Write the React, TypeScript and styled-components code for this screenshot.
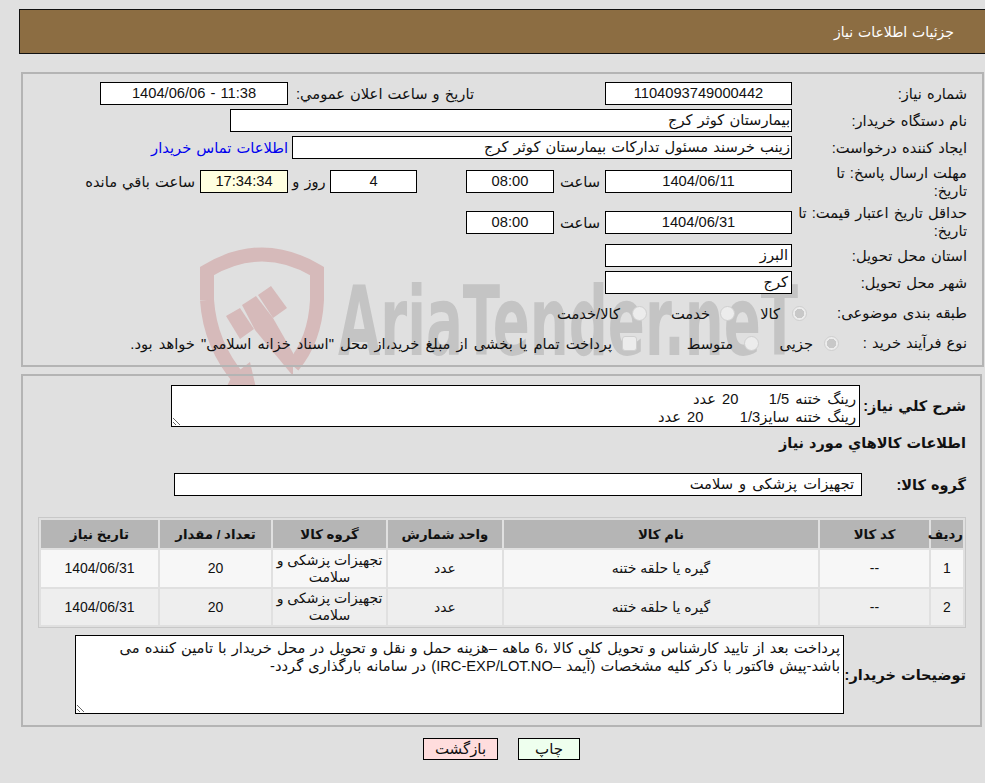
import React from "react";
import styled, { createGlobalStyle } from "styled-components";

const fontStack = `"Liberation Sans", "DejaVu Sans", sans-serif`;

const GlobalStyle = createGlobalStyle`
html, body {
  margin: 0;
  padding: 0;
  background: #e0e0e0;
}
body {
  font-family: ${fontStack};
  font-size: 14.7px;
  word-spacing: 1px;
  color: #111;
}
`;

const Page = styled.div`
  position: relative;
  width: 985px;
  height: 783px;
  overflow: hidden;
  direction: rtl;
  padding-top: 9px;
  box-sizing: border-box;
`;

const Watermark = styled.svg`
  position: absolute;
  left: 190px;
  top: 240px;
  width: 640px;
  height: 160px;
  z-index: 0;
`;

const Header = styled.div`
  position: relative;
  z-index: 1;
  box-sizing: border-box;
  height: 45px;
  margin-left: 19px;
  padding-right: 31px;
  display: flex;
  align-items: center;
  background: #8c6d42;
  border: 1px solid #111;
  border-right: none;
  color: #fff;
  font-size: 14px;
`;

const Panel = styled.div<{ $top: number; $right: number }>`
  position: relative;
  z-index: 1;
  box-sizing: border-box;
  margin-top: ${(p) => p.$top}px;
  margin-left: 21px;
  margin-right: ${(p) => p.$right}px;
  border: 2px solid #b4b4b4;
`;

const FormPanel = styled(Panel)`
  height: 295px;
  padding: 8px 15px 0 0;
  display: flex;
  flex-direction: column;
  gap: 4px;
`;

const DetailPanel = styled(Panel)`
  height: 353px;
  padding: 9px 14px 0 0;
`;

const Row = styled.div<{ $h?: number }>`
  display: flex;
  align-items: center;
  height: ${(p) => p.$h ?? 23}px;
`;

const Label = styled.div<{ $w?: number }>`
  box-sizing: border-box;
  width: ${(p) => p.$w ?? 175}px;
  flex: none;
  padding-left: 5px;
  line-height: 18px;
`;

const BoldLabel = styled.div<{ $w: number }>`
  width: ${(p) => p.$w}px;
  flex: none;
  font-size: 14.5px;
  font-weight: 700;
  white-space: nowrap;
`;

const Field = styled.div<{ $w: number; $center?: boolean; $pad?: number; $bg?: string; $ws?: number }>`
  box-sizing: border-box;
  width: ${(p) => p.$w}px;
  height: 23px;
  flex: none;
  padding: 0 ${(p) => p.$pad ?? 1}px;
  line-height: 21px;
  background: ${(p) => p.$bg ?? "#fff"};
  border: 1px solid #000;
  text-align: ${(p) => (p.$center ? "center" : "start")};
  word-spacing: ${(p) => p.$ws ?? 1}px;
  white-space: nowrap;
  overflow: hidden;
`;

const Text = styled.span<{ $before?: number; $w?: number; $center?: boolean }>`
  flex: none;
  margin-right: ${(p) => p.$before ?? 0}px;
  width: ${(p) => (p.$w ? `${p.$w}px` : "auto")};
  text-align: ${(p) => (p.$center ? "center" : "start")};
  white-space: nowrap;
`;

const PurchaseNote = styled(Text)`
  word-spacing: 2px;
`;

const ContactLink = styled.a`
  flex: none;
  margin-right: 4px;
  color: #0000ee;
  text-decoration: none;
  white-space: nowrap;
`;

const Radio = styled.input`
  appearance: none;
  flex: none;
  box-sizing: border-box;
  width: 15px;
  height: 15px;
  margin: 0;
  border-radius: 50%;
  border: 1px solid #cfcfcf;
  background: #ececec;
  &:checked {
    background: radial-gradient(circle, #c8c8c8 0 4.5px, #ececec 5px);
  }
`;

const CheckBox = styled.span`
  flex: none;
  box-sizing: border-box;
  width: 15px;
  height: 15px;
  border-radius: 3px;
  border: 1px solid #cfcfcf;
  background: #ececec;
`;

const NoteArea = styled.textarea<{ $w: number; $h: number; $pt: number; $ws: number }>`
  box-sizing: border-box;
  flex: none;
  width: ${(p) => p.$w}px;
  height: ${(p) => p.$h}px;
  margin: 0;
  padding: ${(p) => p.$pt}px 3px 0;
  border: 1px solid #000;
  border-radius: 0;
  outline: none;
  background: #fff;
  color: #111;
  font-family: ${fontStack};
  font-size: 14.7px;
  word-spacing: ${(p) => p.$ws}px;
  line-height: 18px;
  overflow: hidden;
  resize: both;
`;

const SectionTitle = styled.div`
  margin-top: 7px;
  height: 18px;
  line-height: 18px;
  font-size: 14.5px;
  font-weight: 700;
`;

const GroupRow = styled(Row)`
  margin-top: 21px;
`;

const ItemsTable = styled.table`
  box-sizing: border-box;
  width: 928px;
  margin-top: 21px;
  table-layout: fixed;
  border-collapse: separate;
  border-spacing: 2px;
  border: 1px solid #c8c8c8;
  font-size: 14px;
  word-spacing: 0;
  text-align: center;
`;

const HeadCell = styled.th`
  height: 28px;
  padding: 0;
  background: #b5b5b5;
  font-weight: 700;
  font-size: 13.3px;
`;

const Cell = styled.td<{ $even: boolean }>`
  height: ${(p) => (p.$even ? 36 : 37)}px;
  padding: 0 2px;
  line-height: 17px;
  background: ${(p) => (p.$even ? "#eeeeee" : "#f7f7f7")};
`;

const NotesRow = styled.div`
  display: flex;
  align-items: center;
  margin-top: 7px;
`;

const Actions = styled.div`
  position: relative;
  z-index: 1;
  display: flex;
  gap: 20px;
  margin-top: 11px;
  margin-right: 405px;
`;

const ActionButton = styled.button<{ $bg: string; $w: number }>`
  box-sizing: border-box;
  flex: none;
  width: ${(p) => p.$w}px;
  height: 22px;
  padding: 0;
  border: 1px solid #000;
  background: ${(p) => p.$bg};
  color: #111;
  font-family: ${fontStack};
  font-size: 15px;
  line-height: 20px;
`;

const columns: [string, number][] = [
  ["رديف", 32],
  ["کد کالا", 109],
  ["نام کالا", 314],
  ["واحد شمارش", 114],
  ["گروه کالا", 113],
  ["تعداد / مقدار", 111],
  ["تاریخ نیاز", 117],
];

const items = [
  ["1", "--", "گیره یا حلقه ختنه", "عدد", "تجهیزات پزشکی و سلامت", "20", "1404/06/31"],
  ["2", "--", "گیره یا حلقه ختنه", "عدد", "تجهیزات پزشکی و سلامت", "20", "1404/06/31"],
];

const summary = "رینگ ختنه 1/5     20 عدد\nرینگ ختنه سایز1/3      20 عدد";
const buyerNotes =
  "پرداخت بعد از تایید کارشناس و تحویل کلی کالا ،6 ماهه –هزینه حمل و نقل و تحویل در محل خریدار با تامین کننده می\nباشد-پیش فاکتور با ذکر کلیه مشخصات (آیمد –IRC-EXP/LOT.NO) در سامانه بارگذاری گردد-";

const App: React.FunctionComponent<{}> = () => {
  return (
    <Page>
      <GlobalStyle />
      <Watermark viewBox="0 0 640 160">
        <g fill="none" stroke="#d6baba" strokeWidth="14">
          <path d="M17 60 L17 31 Q72 -2 127 31 L127 60 Q125 100 103 126" />
          <path d="M17 60 Q20 105 50 140" />
        </g>
        <g fill="#d6baba">
          <path d="M36 76 L50 68 L64 89 L50 99 Z" />
          <path d="M52 65 L66 56 L83 78 L103 113 L103 136 L65 90 Z" />
          <path d="M68 55 L81 46 L97 68 L83 78 Z" />
          <path d="M60 122 L66 148 L36 148 L42 136 Z" />
        </g>
        <text
          x="148"
          y="115"
          fill="#c4c4c4"
          fontFamily="'DejaVu Sans', sans-serif"
          fontWeight="700"
          fontSize="96"
          direction="ltr"
          textLength="460"
          lengthAdjust="spacingAndGlyphs"
        >
          AriaTender.neT
        </text>
      </Watermark>

      <Header>جزئیات اطلاعات نیاز</Header>

      <FormPanel $top={18} $right={1}>
        <Row>
          <Label>شماره نیاز:</Label>
          <Field $w={187} $center>1104093749000442</Field>
          <Text $before={131} $w={186}>تاریخ و ساعت اعلان عمومي:</Text>
          <Field $w={188} $center>11:38 - 1404/06/06</Field>
        </Row>
        <Row>
          <Label>نام دستگاه خریدار:</Label>
          <Field $w={562}>بیمارستان کوثر کرج</Field>
        </Row>
        <Row>
          <Label>ایجاد کننده درخواست:</Label>
          <Field $w={500}>زینب خرسند مسئول تدارکات بیمارستان کوثر کرج</Field>
          <ContactLink href="#">اطلاعات تماس خریدار</ContactLink>
        </Row>
        <Row $h={37}>
          <Label>مهلت ارسال پاسخ: تا<br />تاریخ:</Label>
          <Field $w={187} $center>1404/06/11</Field>
          <Text $before={5} $w={46}>ساعت</Text>
          <Field $w={88} $center>08:00</Field>
          <Text $before={49} />
          <Field $w={87} $center>4</Field>
          <Text $w={42} $center>روز و</Text>
          <Field $w={88} $center $bg="#ffffe0">17:34:34</Field>
          <Text $before={5}>ساعت باقي مانده</Text>
        </Row>
        <Row $h={36}>
          <Label>حداقل تاریخ اعتبار قیمت: تا<br />تاریخ:</Label>
          <Field $w={187} $center>1404/06/31</Field>
          <Text $before={5} $w={46}>ساعت</Text>
          <Field $w={88} $center>08:00</Field>
        </Row>
        <Row>
          <Label>استان محل تحویل:</Label>
          <Field $w={187} $pad={3}>البرز</Field>
        </Row>
        <Row>
          <Label>شهر محل تحویل:</Label>
          <Field $w={187} $pad={3}>کرج</Field>
        </Row>
        <Row $h={30}>
          <Label $w={160}>طبقه بندی موضوعی:</Label>
          <Radio type="radio" name="category" defaultChecked disabled />
          <Text $before={12} $w={45}>کالا</Text>
          <Radio type="radio" name="category" disabled />
          <Text $before={10} $w={63}>خدمت</Text>
          <Radio type="radio" name="category" disabled />
          <Text $before={12}>کالا/خدمت</Text>
        </Row>
        <Row $h={22}>
          <Label $w={128}>نوع فرآیند خرید :</Label>
          <Radio type="radio" name="process" defaultChecked disabled />
          <Text $before={11} $w={54}>جزیی</Text>
          <Radio type="radio" name="process" disabled />
          <Text $before={11} $w={96}>متوسط</Text>
          <CheckBox />
          <PurchaseNote $before={10}>پرداخت تمام یا بخشی از مبلغ خرید،از محل "اسناد خزانه اسلامی" خواهد بود.</PurchaseNote>
        </Row>
      </FormPanel>

      <DetailPanel $top={7} $right={3}>
        <Row $h={42}>
          <BoldLabel $w={106}>شرح کلي نياز:</BoldLabel>
          <NoteArea $w={689} $h={42} $pt={4} $ws={2} readOnly value={summary} />
        </Row>
        <SectionTitle>اطلاعات کالاهاي مورد نياز</SectionTitle>
        <GroupRow>
          <BoldLabel $w={104}>گروه کالا:</BoldLabel>
          <Field $w={688} $pad={7} $ws={2}>تجهیزات پزشکی و سلامت</Field>
        </GroupRow>
        <ItemsTable>
          <colgroup>
            {columns.map(([title, width]) => (
              <col key={title} style={{ width }} />
            ))}
          </colgroup>
          <thead>
            <tr>
              {columns.map(([title]) => (
                <HeadCell key={title}>{title}</HeadCell>
              ))}
            </tr>
          </thead>
          <tbody>
            {items.map((row, i) => (
              <tr key={row[0]}>
                {row.map((value, j) => (
                  <Cell key={j} $even={i % 2 === 1}>{value}</Cell>
                ))}
              </tr>
            ))}
          </tbody>
        </ItemsTable>
        <NotesRow>
          <BoldLabel $w={122}>توضیحات خریدار:</BoldLabel>
          <NoteArea $w={769} $h={79} $pt={3} $ws={1} readOnly value={buyerNotes} />
        </NotesRow>
      </DetailPanel>

      <Actions>
        <ActionButton type="button" $bg="#eeffee" $w={62}>چاپ</ActionButton>
        <ActionButton type="button" $bg="#ffdddd" $w={75}>بازگشت</ActionButton>
      </Actions>
    </Page>
  );
};

export default App;
